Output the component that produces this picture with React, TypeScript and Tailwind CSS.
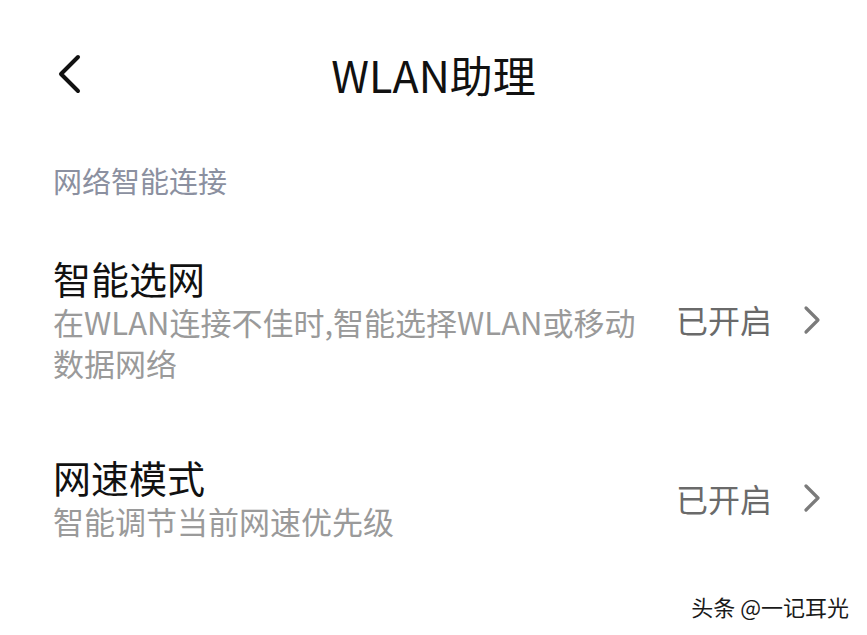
import { ReactNode } from "react";

const font = { fontFamily: '"Noto Sans CJK SC", "Noto Sans", sans-serif' };

function BackIcon() {
  return (
    <svg width="26" height="40" viewBox="0 0 26 40" fill="none">
      <path d="M22 3 L5 20 L22 37" stroke="#111" strokeWidth="4" strokeLinecap="round" strokeLinejoin="round" />
    </svg>
  );
}

function ChevronIcon() {
  return (
    <svg width="20" height="30" viewBox="0 0 20 30" fill="none">
      <path d="M4 3 L16 15 L4 27" stroke="#7b7b7b" strokeWidth="3.2" strokeLinecap="round" strokeLinejoin="round" />
    </svg>
  );
}

function SettingRow({ title, desc, value }: { title: string; desc: ReactNode; value: string }) {
  return (
    <div className="flex items-center">
      <div className="flex w-[585px] flex-col gap-[1px]">
        <div className="text-[38px] leading-[44px] text-[#111]">{title}</div>
        <div className="text-[31px] leading-[41px] text-[#9a9a9a]">{desc}</div>
      </div>
      <div className="ml-auto flex items-center gap-[30px] pr-[45px]">
        <span className="text-[32px] leading-[41px] text-[#6a6a6a]">{value}</span>
        <ChevronIcon />
      </div>
    </div>
  );
}

export default function App() {
  return (
    <div className="relative h-[635px] w-[867px] overflow-hidden bg-white" style={font}>
      {/* top bar */}
      <div className="grid h-[148px] grid-cols-[1fr_auto_1fr] items-center">
        <div className="pl-[56px]">
          <BackIcon />
        </div>
        <h1 className="text-[43px] font-normal text-[#111]">WLAN助理</h1>
        <div />
      </div>

      <div className="pl-[53px]">
        <div className="mt-[12px] text-[29px] leading-[40px] text-[#8b90a0]">网络智能连接</div>

        <div className="mt-[56px]">
          <SettingRow title="智能选网" desc="在WLAN连接不佳时,智能选择WLAN或移动数据网络" value="已开启" />
        </div>

        <div className="mt-[72px]">
          <SettingRow title="网速模式" desc="智能调节当前网速优先级" value="已开启" />
        </div>
      </div>

      {/* source watermark */}
      <div
        className="absolute bottom-[16px] right-[18px] text-[22px] leading-[26px] text-[#1a1a1a]"
        style={{ textShadow: "1px 1px 0 #fff, -1px -1px 0 #fff" }}
      >
        头条 @一记耳光
      </div>
    </div>
  );
}
